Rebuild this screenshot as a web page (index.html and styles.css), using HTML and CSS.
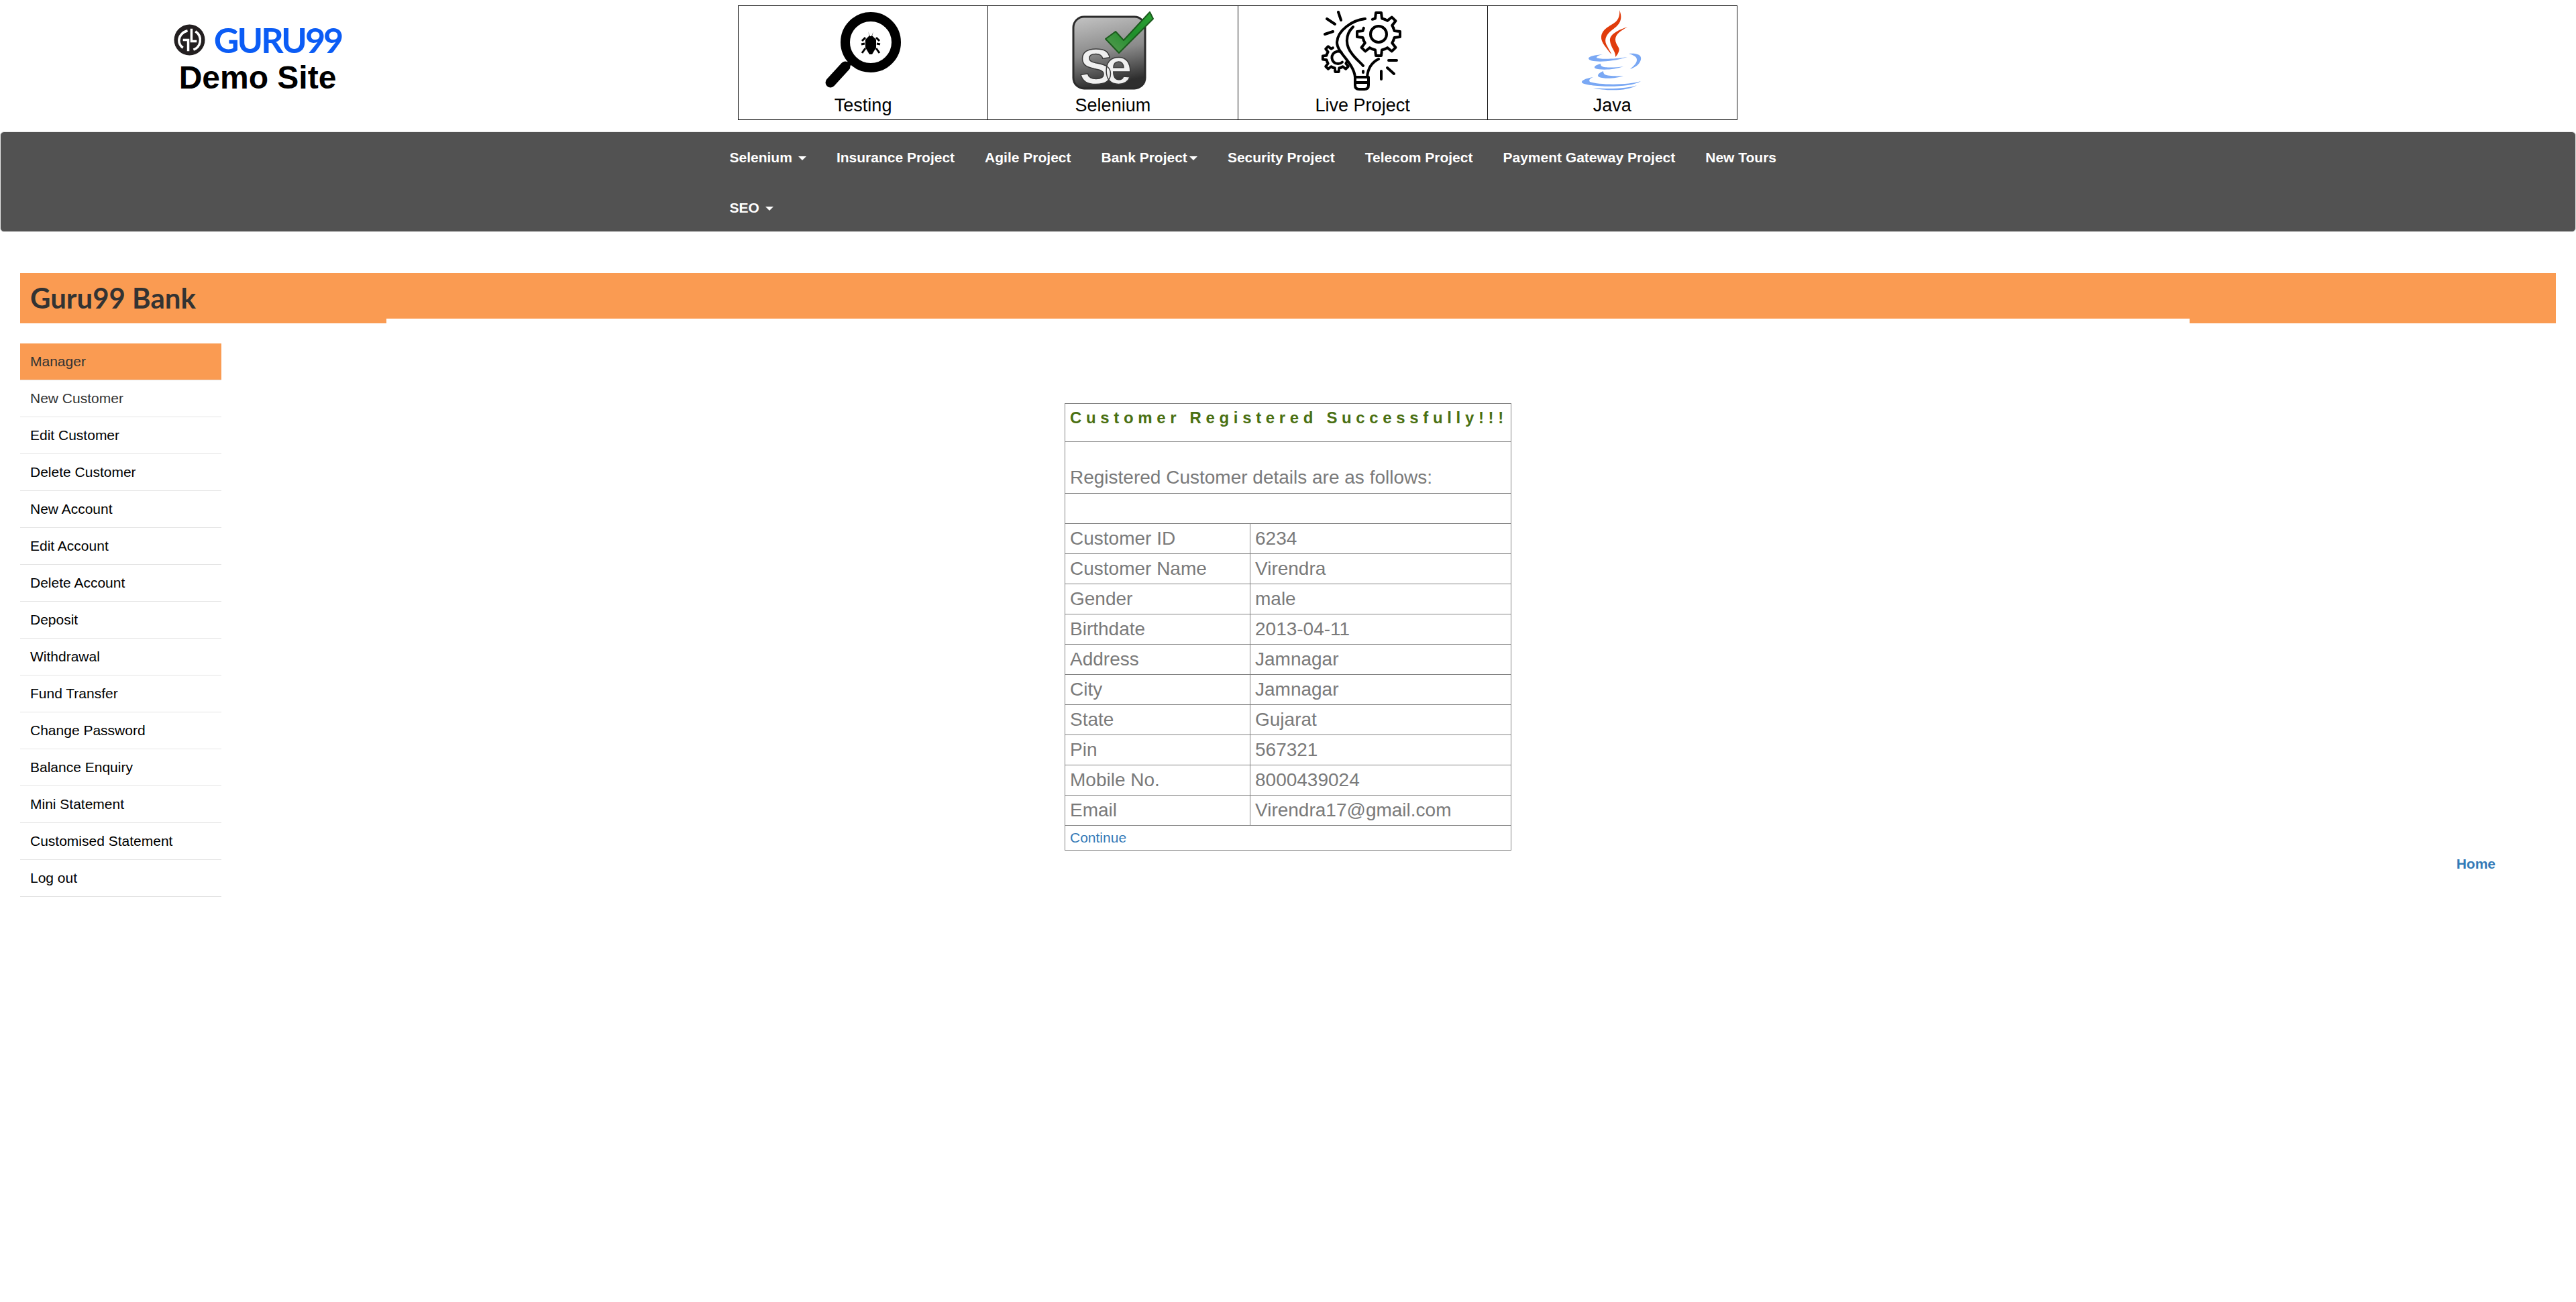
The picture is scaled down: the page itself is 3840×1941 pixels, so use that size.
FILE: index.html
```html
<!DOCTYPE html>
<html lang="en">
<head>
    <meta charset="UTF-8">
    <title>Guru99 Bank Customer Registration Page</title>
    <link rel="stylesheet" href="styles.css">
</head>
<body>
    <!-- logo and course tiles -->
    <div class="top">
        <div class="logo">
            <div class="logo-row">
                <svg class="logo-mark" viewBox="0 0 48 48">
                    <circle cx="24" cy="24" r="23.5" fill="#231f20"/>
                    <g fill="none" stroke="#fff" stroke-width="3.6">
                        <path d="M21 10C13 12 8 18 8 25C8 29 10 33 14 36"/>
                        <path d="M14 24H22V41"/>
                        <path d="M27 7V26H35"/>
                        <path d="M33 11C39 15 41 21 40 27C39 33 35 37 30 39"/>
                    </g>
                </svg>
                <span class="logo-name">GURU99</span>
            </div>
            <div class="logo-sub">Demo Site</div>
        </div>
        <table class="tiles">
            <tr>
                <td>
                    <svg class="tile-icon" viewBox="0 0 130 130">
                        <circle cx="76" cy="54" r="38" fill="none" stroke="#000" stroke-width="14"/>
                        <path d="M48 82L37 92" stroke="#000" stroke-width="7"/>
                        <path d="M38 90L16 114" stroke="#000" stroke-width="15" stroke-linecap="round"/>
                        <path d="M72 38L75 45H77L80 38L78 44L84 50V62L78 72H74L68 62V50L74 44Z" fill="#000"/>
                        <path d="M68 47L63 52M84 47L89 52M67 56L62 57M85 56L90 57M68 63L63 70M84 63L89 70" stroke="#000" stroke-width="3"/>
                    </svg>
                    <div class="tile-label">Testing</div>
                </td>
                <td>
                    <svg class="tile-icon" viewBox="0 0 130 130">
                        <defs>
                            <linearGradient id="seBox" x1="0" y1="0" x2="0.2" y2="1">
                                <stop offset="0" stop-color="#c4c4c4"/>
                                <stop offset="0.55" stop-color="#8a8a8a"/>
                                <stop offset="1" stop-color="#2e2e2e"/>
                            </linearGradient>
                            <linearGradient id="seCheck" x1="0" y1="1" x2="1" y2="0">
                                <stop offset="0" stop-color="#5c9a55"/>
                                <stop offset="0.5" stop-color="#1f8f2b"/>
                                <stop offset="1" stop-color="#2aa333"/>
                            </linearGradient>
                        </defs>
                        <rect x="6" y="16" width="107" height="107" rx="16" fill="url(#seBox)" stroke="#2b2b2b" stroke-width="3"/>
                        <text class="se-text" x="15" y="116">Se</text>
                        <path d="M120 9L125 19L74 70L54 49L69 38L81 51Z" fill="url(#seCheck)" stroke="#1c5a1e" stroke-width="2" stroke-linejoin="round"/>
                    </svg>
                    <div class="tile-label">Selenium</div>
                </td>
                <td>
                    <svg class="tile-icon" viewBox="0 0 130 130" fill="none" stroke="#000" stroke-width="4" stroke-linecap="round" stroke-linejoin="round">
                        <defs>
                            <path id="gearTooth" d="M-9.2-22.2L-5-23.5L-4-32H4L5-23.5L9.2-22.2"/>
                        </defs>
                        <path d="M69 19C50 21 28 36 27 54C27 70 52 84 54 106"/>
                        <path d="M51 31C38 44 40 60 50 72C56 80 62 84 66 89"/>
                        <path d="M66 97V99M89 79C79 84 73 92 72 106"/>
                        <path d="M54 106H74V118Q74 124 68 124H60Q54 124 54 118ZM54 114H74"/>
                        <path d="M29 9L33 21M12 19L24 27M9 42L21 38M104 81H116M102 92L112 101M93 97V109"/>
                        <g transform="translate(89 42)">
                            <circle r="12"/>
                            <use href="#gearTooth"/>
                            <use href="#gearTooth" transform="rotate(45)"/>
                            <use href="#gearTooth" transform="rotate(90)"/>
                            <use href="#gearTooth" transform="rotate(135)"/>
                            <use href="#gearTooth" transform="rotate(180)"/>
                            <use href="#gearTooth" transform="rotate(225)"/>
                            <use href="#gearTooth" transform="rotate(270)"/>
                        </g>
                        <g transform="translate(27 77) scale(.66)" stroke-width="6">
                            <path d="M10 -12A14 14 0 1 0 12 10"/>
                            <use href="#gearTooth" transform="rotate(-45)"/>
                            <use href="#gearTooth" transform="rotate(-90)"/>
                            <use href="#gearTooth" transform="rotate(-135)"/>
                            <use href="#gearTooth" transform="rotate(180)"/>
                            <use href="#gearTooth" transform="rotate(135)"/>
                        </g>
                    </svg>
                    <div class="tile-label">Live Project</div>
                </td>
                <td>
                    <svg class="tile-icon" viewBox="0 0 130 130">
                        <g fill="#e03c0c">
                            <path d="M76 6C82 20 76 28 66 35C54 44 53 52 58 60C61 66 64 70 64 72C58 64 48 54 49 46C50 34 62 30 70 24C75 20 77 12 76 6Z"/>
                            <path d="M88 31C78 37 70 42 70 50C70 58 78 62 75 68C74 71 72 74 70 76C71 68 63 62 62 52C61 42 74 36 88 31Z"/>
                        </g>
                        <g fill="#7aa8f4">
                            <path d="M51 72C40 73 30 75 30 78C30 84 60 85 88 76C70 79 46 80 42 77C42 75 46 73 51 72Z"/>
                            <path d="M90 71C100 70 110 72 108 80C106 88 98 92 92 94C96 90 102 86 102 80C102 75 96 73 90 71Z"/>
                            <path d="M48 86C40 88 37 91 40 93C48 96 70 95 82 90C70 92 54 92 50 90C48 89 48 87 48 86Z"/>
                            <path d="M52 97C44 100 42 104 46 106C54 109 72 108 82 104C70 105 58 104 54 102C52 100 52 98 52 97Z"/>
                            <path d="M37 106C25 108 19 111 20 114C24 120 90 124 108 112C90 118 46 118 32 113C30 110 32 108 37 106Z"/>
                            <path d="M37 122C55 127 90 127 102 118C90 123 60 124 37 122Z"/>
                        </g>
                    </svg>
                    <div class="tile-label">Java</div>
                </td>
            </tr>
        </table>
    </div>

    <!-- main menu -->
    <div class="navbar">
        <ul class="nav">
            <li><a href="#">Selenium<span class="caret"></span></a></li>
            <li><a href="#">Insurance Project</a></li>
            <li><a href="#">Agile Project</a></li>
            <li><a href="#">Bank Project<span class="caret tight"></span></a></li>
            <li><a href="#">Security Project</a></li>
            <li><a href="#">Telecom Project</a></li>
            <li><a href="#">Payment Gateway Project</a></li>
            <li><a href="#">New Tours</a></li>
            <li><a href="#">SEO<span class="caret"></span></a></li>
        </ul>
    </div>

    <div class="page">
        <div class="title-bar"><h2>Guru99 Bank</h2></div>

        <div class="layout">
            <ul class="menu">
                <li class="menu-head"><a href="#">Manager</a></li>
                <li class="current"><a href="#">New Customer</a></li>
                <li><a href="#">Edit Customer</a></li>
                <li><a href="#">Delete Customer</a></li>
                <li><a href="#">New Account</a></li>
                <li><a href="#">Edit Account</a></li>
                <li><a href="#">Delete Account</a></li>
                <li><a href="#">Deposit</a></li>
                <li><a href="#">Withdrawal</a></li>
                <li><a href="#">Fund Transfer</a></li>
                <li><a href="#">Change Password</a></li>
                <li><a href="#">Balance Enquiry</a></li>
                <li><a href="#">Mini Statement</a></li>
                <li><a href="#">Customised Statement</a></li>
                <li><a href="#">Log out</a></li>
            </ul>

            <table class="details">
                <tr class="row-heading"><td colspan="2"><p class="heading">Customer Registered Successfully!!!</p></td></tr>
                <tr class="row-intro"><td colspan="2">Registered Customer details are as follows:</td></tr>
                <tr><td colspan="2"></td></tr>
                <tr><td class="label-cell">Customer ID</td><td>6234</td></tr>
                <tr><td>Customer Name</td><td>Virendra</td></tr>
                <tr><td>Gender</td><td>male</td></tr>
                <tr><td>Birthdate</td><td>2013-04-11</td></tr>
                <tr><td>Address</td><td>Jamnagar</td></tr>
                <tr><td>City</td><td>Jamnagar</td></tr>
                <tr><td>State</td><td>Gujarat</td></tr>
                <tr><td>Pin</td><td>567321</td></tr>
                <tr><td>Mobile No.</td><td>8000439024</td></tr>
                <tr><td>Email</td><td>Virendra17@gmail.com</td></tr>
                <tr class="row-link"><td colspan="2"><a href="#">Continue</a></td></tr>
            </table>

            <div class="home-wrap"><a class="home-link" href="#">Home</a></div>
        </div>
    </div>
</body>
</html>
```

FILE: styles.css
```css
body {
    margin: 0;
    font-family: "Liberation Sans", Arial, sans-serif;
    color: #333;
    background-color: #fff;
}
a {
    text-decoration: none;
}
ul {
    list-style: none;
    margin: 0;
    padding: 0;
}
.top {
    display: flex;
    align-items: flex-start;
    height: 196px;
}
.logo {
    width: 768px;
    padding-top: 36px;
    display: flex;
    flex-direction: column;
    align-items: center;
}
.logo-row {
    display: flex;
    align-items: center;
    gap: 13px;
    height: 47px;
}
.logo-mark {
    width: 47px;
    height: 47px;
}
.logo-name {
    font-family: Lato, sans-serif;
    font-size: 52px;
    font-weight: 700;
    line-height: 47px;
    color: #0b5cf5;
    letter-spacing: -3px;
}
.logo-sub {
    margin-top: 5px;
    font-size: 48px;
    font-weight: bold;
    line-height: 56px;
    color: #000;
}
.tiles {
    margin: 8px 0 0 332px;
    width: 1490px;
    height: 171px;
    table-layout: fixed;
    border-collapse: collapse;
}
.tiles td {
    padding: 0;
    border: 1px solid #111;
    text-align: center;
    vertical-align: top;
}
.tile-icon {
    display: block;
    width: 130px;
    height: 130px;
    margin: 0 auto;
    overflow: visible;
}
.tile-label {
    font-size: 27px;
    line-height: 36px;
    color: #000;
}
.se-text {
    font-family: "Liberation Sans", sans-serif;
    font-size: 74px;
    font-weight: bold;
    letter-spacing: -12px;
    fill: #f0f0f0;
    stroke: #3a3a3a;
    stroke-width: 1.5px;
}
.navbar {
    height: 150px;
    box-sizing: border-box;
    background-color: #525252;
    border: 1px solid #e7e7e7;
    border-radius: 6px;
    padding-left: 1064px;
}
.nav {
    display: flex;
    flex-wrap: wrap;
    width: 1650px;
}
.nav a {
    display: block;
    padding: 0 22.5px;
    font-size: 21px;
    font-weight: bold;
    line-height: 75px;
    color: #fff;
}
.caret {
    display: inline-block;
    margin-left: 9px;
    vertical-align: middle;
    border-top: 6px solid #fff;
    border-left: 6px solid transparent;
    border-right: 6px solid transparent;
}
.caret.tight {
    margin-left: 3px;
}
.page {
    padding: 61px 30px 0;
}
.title-bar {
    position: relative;
    height: 75px;
    background-color: #fa9b52;
}
/* white strip that cuts into the bottom of the bar */
.title-bar::after {
    content: "";
    position: absolute;
    left: 546px;
    right: 546px;
    bottom: 0;
    height: 7px;
    background-color: #fff;
}
.title-bar h2 {
    margin: 0;
    padding-left: 15px;
    font-family: Lato, sans-serif;
    font-size: 42px;
    font-weight: 700;
    line-height: 75px;
    color: #333;
}
.layout {
    display: grid;
    grid-template-columns: 300px 1fr 300px;
    margin-top: 30px;
    align-items: start;
}
.menu li {
    border-bottom: 1px solid #e4e4e4;
}
.menu a {
    display: block;
    height: 54px;
    padding-left: 15px;
    font-size: 21px;
    line-height: 54px;
    color: #000;
}
.menu .menu-head a {
    background-color: #fa9b52;
    color: #333;
}
.menu .current a {
    color: #333;
}
.details {
    margin: 89px auto 0;
    width: 666px;
    border-collapse: collapse;
    font-size: 28px;
    color: #7a7a7a;
}
.details td {
    height: 44px;
    padding: 0 7px;
    border: 1px solid #808080;
    line-height: 32px;
}
.details .label-cell {
    width: 261px;
}
.row-heading td {
    height: 56px;
    vertical-align: top;
}
/* negative right margin takes up the letter-spacing after the last glyph */
.heading {
    margin: 7px -8px 0 0;
    font-size: 24px;
    font-weight: bold;
    line-height: 28px;
    letter-spacing: 6.65px;
    white-space: nowrap;
    color: #4a7012;
}
.row-intro td {
    height: 69px;
    padding-bottom: 7px;
    vertical-align: bottom;
}
.row-link td {
    height: 36px;
    font-size: 21px;
}
.details a {
    color: #337ab7;
}
.home-wrap {
    margin-top: 761px;
    padding-right: 90px;
    text-align: right;
}
.home-link {
    font-size: 21px;
    font-weight: bold;
    line-height: 30px;
    color: #337ab7;
}
```
